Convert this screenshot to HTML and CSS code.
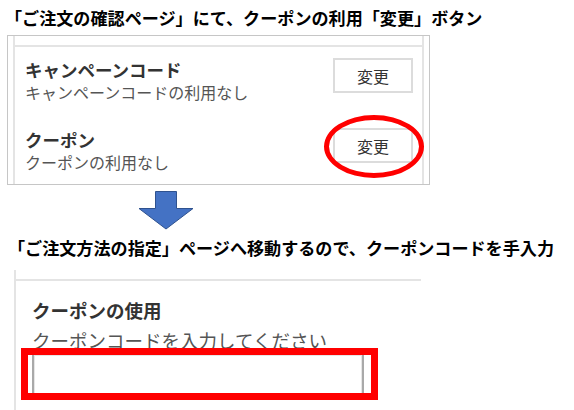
FILE: index.html
```html
<!DOCTYPE html>
<html lang="ja">
<head>
  <meta charset="UTF-8">
  <title>クーポンの利用方法</title>
  <meta name="viewport" content="width=device-width, initial-scale=1.0"/>
  <link rel="stylesheet" href="styles.css">
</head>
<body>

<!-- 手順1 -->
<h2 class="step-title first">「ご注文の確認ページ」にて、クーポンの利用「変更」ボタン</h2>

<div class="shot">
  <div class="shot-inner">
    <div class="rule"></div>

    <div class="row">
      <div class="row-text">
        <div class="row-name">キャンペーンコード</div>
        <div class="row-sub">キャンペーンコードの利用なし</div>
      </div>
      <button class="change-btn">変更</button>
    </div>

    <div class="row">
      <div class="row-text">
        <div class="row-name">クーポン</div>
        <div class="row-sub">クーポンの利用なし</div>
      </div>
      <button class="change-btn marked">変更<span class="circle"></span></button>
    </div>
  </div>
</div>

<!-- 矢印 -->
<svg class="arrow" width="58" height="40" viewBox="0 0 58 40">
  <path d="M18.5 1.5 H39.5 V18.5 H56 L29 39 L2 18.5 H18.5 Z" fill="#4472c4" stroke="#2f528f" stroke-width="1"/>
</svg>

<!-- 手順2 -->
<h2 class="step-title second">「ご注文方法の指定」ページへ移動するので、クーポンコードを手入力</h2>

<div class="shot2">
  <div class="rule"></div>
  <div class="coupon-box">
    <div class="coupon-name">クーポンの使用</div>
    <div class="coupon-sub">クーポンコードを入力してください</div>
    <div class="coupon-field">
      <input class="coupon-input" type="text">
      <span class="frame"></span>
    </div>
  </div>
</div>

</body>
</html>
```

FILE: styles.css
```css
body {
  margin: 0;
  padding: 0;
  background: #fff;
  font-family: "Noto Sans CJK JP", "Noto Sans", sans-serif;
  color: #000;
  overflow: hidden;
}

.step-title {
  margin: 0;
  font-size: 17.1px;
  line-height: 20px;
  font-weight: bold;
  color: #000;
  white-space: nowrap;
}

.step-title.first {
  margin-top: 8px;
  padding-left: 5px;
}

.step-title.second {
  margin-top: 8px;
  padding-left: 8px;
}

/* 確認ページの切り抜き */
.shot {
  margin: 7px 0 0 7px;
  width: 423px;
  height: 150px;
  box-sizing: border-box;
  border: 1px solid #c6c6c6;
  padding: 0 5px;
  overflow: hidden;
}

.shot-inner {
  height: 100%;
  border-left: 2px solid #e4e4e4;
  border-right: 2px solid #e4e4e4;
}

.rule {
  height: 9px;
  border-bottom: 2px solid #e4e4e4;
}

.row {
  display: flex;
  justify-content: space-between;
  align-items: flex-start;
  padding: 12px 9px 14px 10px;
}

.row-name {
  font-size: 17.5px;
  line-height: 22px;
  font-weight: bold;
  color: #333;
}

.row-sub {
  font-size: 16px;
  line-height: 22px;
  color: #555;
}

.change-btn {
  position: relative;
  width: 80px;
  height: 35px;
  margin-top: -1px;
  background: #fff;
  border: 2px solid #dcdcdc;
  font-family: inherit;
  font-size: 16px;
  color: #333;
  padding: 0;
}

.circle {
  position: absolute;
  left: -11px;
  top: -15px;
  width: 100px;
  height: 63px;
  box-sizing: border-box;
  border: 5px solid #f00;
  border-radius: 50%;
}

.arrow {
  display: block;
  margin: 5px 0 0 137px;
}

/* ご注文方法の指定の切り抜き */
.shot2 {
  margin: 12px 0 0 14px;
  width: 405px;
  height: 140px;
  border-left: 2px solid #e4e4e4;
}

.coupon-box {
  padding: 17px 0 0 16px;
}

.coupon-name {
  font-size: 18.5px;
  line-height: 24px;
  font-weight: bold;
  color: #333;
}

.coupon-sub {
  margin-top: 6px;
  font-size: 18.5px;
  line-height: 24px;
  color: #555;
}

.coupon-field {
  position: relative;
  width: 332px;
  margin-top: 1px;
}

.coupon-input {
  display: block;
  width: 332px;
  height: 43px;
  box-sizing: border-box;
  border: 2px solid #a9a9a9;
  box-shadow: inset 0 0 0 1px #e6e6e6;
  padding: 0;
}

.frame {
  position: absolute;
  left: -11px;
  top: -5px;
  width: 357px;
  height: 52px;
  box-sizing: border-box;
  border: 7px solid #f00;
}
```
